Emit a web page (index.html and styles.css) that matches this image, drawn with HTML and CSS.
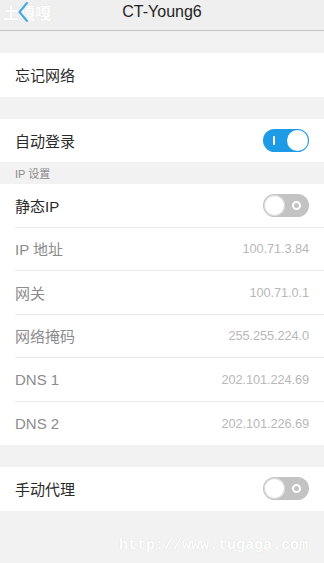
FILE: index.html
```html
<!DOCTYPE html>
<html lang="zh">
<head>
<meta charset="utf-8">
<link rel="stylesheet" href="styles.css">
</head>
<body>
<div class="screen">
  <header class="topbar">
    <div class="back">
      <span class="wm-top">土嘎嘎</span>
      <svg class="chev" width="14" height="22" viewBox="0 0 14 22"><path d="M11 2 L3.5 11 L11 20" fill="none" stroke="#45a6e8" stroke-width="2" stroke-linecap="round" stroke-linejoin="round"/></svg>
    </div>
    <div class="title">CT-Young6</div>
  </header>

  <div class="gap"></div>
  <div class="group">
    <div class="row"><span class="label">忘记网络</span></div>
  </div>

  <div class="gap"></div>
  <div class="group">
    <div class="row"><span class="label">自动登录</span><span class="toggle on"><span class="mark"></span><span class="knob"></span></span></div>
  </div>
  <div class="section">IP 设置</div>
  <div class="group">
    <div class="row line"><span class="label">静态IP</span><span class="toggle off"><span class="knob"></span><span class="ring"></span></span></div>
    <div class="row line"><span class="label dim">IP 地址</span><span class="value">100.71.3.84</span></div>
    <div class="row line"><span class="label dim">网关</span><span class="value">100.71.0.1</span></div>
    <div class="row line"><span class="label dim">网络掩码</span><span class="value">255.255.224.0</span></div>
    <div class="row line"><span class="label dim">DNS 1</span><span class="value">202.101.224.69</span></div>
    <div class="row"><span class="label dim">DNS 2</span><span class="value">202.101.226.69</span></div>
  </div>

  <div class="gap"></div>
  <div class="group">
    <div class="row"><span class="label">手动代理</span><span class="toggle off"><span class="knob"></span><span class="ring"></span></span></div>
  </div>

  <div class="bottom">
    <span class="wm">http://www.tugaga.com</span>
  </div>
</div>
</body>
</html>
```
FILE: styles.css
```css
* { box-sizing: border-box; }
html, body { margin: 0; padding: 0; }
body {
  background: #f2f2f2;
  font-family: "Liberation Sans", "Noto Sans CJK SC", sans-serif;
  color: #222;
}
.screen { width: 324px; height: 563px; overflow: hidden; display: flex; flex-direction: column; }
.topbar {
  height: 31px;
  background: #efefef;
  border-bottom: 1px solid #c6c6c6;
  position: relative;
  display: flex;
  align-items: center;
  justify-content: center;
}
.title {
  font-family: "Liberation Sans", Arial, sans-serif;
  font-size: 16px;
  color: #1f1f1f;
  line-height: 1;
  margin-top: -6px;
}
.back {
  position: absolute;
  left: 3px;
  top: 0;
  height: 24px;
  display: flex;
  align-items: center;
}
.wm-top {
  font-family: "Noto Sans CJK SC", serif;
  font-size: 16px;
  font-weight: bold;
  color: #ffffff;
  letter-spacing: 0;
  text-shadow: 0 0 1px rgba(0,0,0,0.12);
  line-height: 1;
}
.chev { position: absolute; left: 13px; top: 1px; }
.gap { height: 22px; }
.group { background: #fff; display: flex; flex-direction: column; }
.row {
  height: 43.5px;
  margin-left: 15px;
  padding-right: 15px;
  display: flex;
  align-items: center;
  justify-content: space-between;
}
.row.line { border-bottom: 1px solid #ececec; }
.label { font-size: 15px; color: #2a2a2a; }
.label.dim { color: #8c8c8c; }
.value {
  font-family: "Liberation Sans", Arial, sans-serif;
  font-size: 12.8px;
  color: #b8b8b8;
  letter-spacing: -0.1px;
}
.section {
  height: 22px;
  padding-left: 15px;
  display: flex;
  align-items: center;
  font-size: 11px;
  color: #8a8a8a;
}
.toggle {
  width: 46px;
  height: 23px;
  border-radius: 12px;
  position: relative;
  display: flex;
  align-items: center;
}
.toggle.on { background: #1d9be6; }
.toggle.off { background: #c3c3c3; }
.knob {
  position: absolute;
  top: 1px;
  width: 21px;
  height: 21px;
  border-radius: 50%;
  background: #fff;
}
.toggle.on .knob { right: 1px; }
.toggle.off .knob { left: 1px; box-shadow: inset 0 0 0 1px #d6d6d6; }
.mark {
  position: absolute;
  left: 10px;
  top: 7px;
  width: 2px;
  height: 9px;
  background: #fff;
  border-radius: 1px;
}
.ring {
  position: absolute;
  right: 8px;
  top: 7px;
  width: 9px;
  height: 9px;
  border-radius: 50%;
  border: 2px solid #fff;
}
.bottom {
  flex: 1;
  display: flex;
  align-items: flex-end;
  justify-content: flex-end;
  padding: 0 16px 9px 0;
}
.wm {
  font-family: "Liberation Mono", "Courier New", monospace;
  font-weight: bold;
  font-size: 15px;
  color: #ffffff;
  text-shadow: 0 0 1px rgba(0,0,0,0.15);
  letter-spacing: 0;
}
```
